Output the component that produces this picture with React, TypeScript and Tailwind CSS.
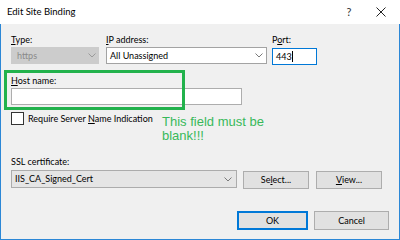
import React from "react";

function Chevron({ color = "#7a7a7a" }: { color?: string }) {
  return (
    <svg width="8" height="5" viewBox="0 0 8 5" className="shrink-0">
      <path d="M0.5 0.5 L4 4 L7.5 0.5" fill="none" stroke={color} strokeWidth="1" />
    </svg>
  );
}

export default function App() {
  return (
    <div className="w-[400px] h-[240px] flex flex-col bg-white font-['Lato',sans-serif] text-[9px] text-black overflow-hidden">
      {/* Title bar */}
      <div className="h-[24px] flex items-center bg-white shrink-0">
        <div className="pl-[7px] text-[9.5px] leading-none">Edit Site Binding</div>
        <div className="ml-auto flex items-center">
          <div className="w-[30px] text-center text-[11px] text-[#333]">?</div>
          <div className="w-[34px] flex justify-center mr-[2px]">
            <svg width="10" height="10" viewBox="0 0 10 10">
              <path d="M0.5 0.5 L9.5 9.5 M9.5 0.5 L0.5 9.5" stroke="#222" strokeWidth="1" />
            </svg>
          </div>
        </div>
      </div>

      {/* Body */}
      <div className="relative flex-1 bg-[#f0f0f0] border-l border-r border-b border-[#2b87d6] pl-[10px] pt-[9px]">
        {/* Row 1 */}
        <div className="flex">
          <div className="flex flex-col w-[88px]">
            <div className="h-[14px] leading-[14px]"><span className="underline">T</span>ype:</div>
            <div className="h-[17px] bg-[#cccccc] flex items-center pl-[6px] pr-[3px] text-[#8a8a8a]">
              <span className="flex-1">https</span>
              <Chevron color="#9a9a9a" />
            </div>
          </div>
          <div className="flex flex-col w-[161px] ml-[7px]">
            <div className="h-[14px] leading-[14px]"><span className="underline">I</span>P address:</div>
            <div className="h-[17px] bg-white border border-[#a3a3a3] flex items-center pl-[3px] pr-[3px]">
              <span className="flex-1">All Unassigned</span>
              <Chevron />
            </div>
          </div>
          <div className="flex flex-col w-[45px] ml-[5px]">
            <div className="h-[14px] leading-[14px]">P<span className="underline">o</span>rt:</div>
            <div className="h-[17px] mt-[1px] bg-white border border-[#0078d7] flex items-center pl-[3px]">
              <span>443</span>
              <span className="w-px h-[11px] bg-black" />
            </div>
          </div>
        </div>

        {/* Host name */}
        <div className="mt-[8px] h-[15px] leading-[15px]"><span className="underline">H</span>ost name:</div>
        <div className="w-[231px] h-[17px] bg-white border border-[#adadad]" />

        {/* Checkbox row */}
        <div className="mt-[7px] flex items-center">
          <div className="w-[13px] h-[13px] border border-[#333] bg-white" />
          <div className="ml-[4px] leading-[13px]">Require Server <span className="underline">N</span>ame Indication</div>
        </div>

        {/* SSL certificate */}
        <div className="mt-[29px] h-[16px] leading-[16px]">SSL certificate:</div>
        <div className="flex items-start">
          <div className="w-[226px] h-[18px] bg-[#e5e5e5] border border-[#acacac] flex items-center pl-[3px] pr-[4px]">
            <span className="flex-1">IIS_CA_Signed_Cert</span>
            <Chevron />
          </div>
          <div className="ml-[6px] mt-[1px] w-[66px] h-[18px] bg-[#e1e1e1] border border-[#adadad] flex items-center justify-center">
            Se<span className="underline">l</span>ect...
          </div>
          <div className="ml-[7px] mt-[1px] w-[66px] h-[18px] bg-[#e1e1e1] border border-[#adadad] flex items-center justify-center">
            <span className="underline">V</span>iew...
          </div>
        </div>

        {/* Bottom buttons */}
        <div className="mt-[22px] flex justify-end pr-[10px]">
          <div className="w-[71px] h-[19px] bg-[#e1e1e1] border-2 border-[#0078d7] flex items-center justify-center">OK</div>
          <div className="ml-[6px] w-[75px] h-[19px] bg-[#e1e1e1] border border-[#adadad] flex items-center justify-center">Cancel</div>
        </div>

        {/* Annotation overlays */}
        <div className="absolute left-[3px] top-[46px] w-[181px] h-[40px] border-[3px] border-[#22b24c]" />
        <div className="absolute left-[161px] top-[91px] font-['Liberation_Sans',sans-serif] text-[13px] leading-[14px] text-[#38b95a]">
          This field must be
          <br />
          blank!!!
        </div>
      </div>
    </div>
  );
}
